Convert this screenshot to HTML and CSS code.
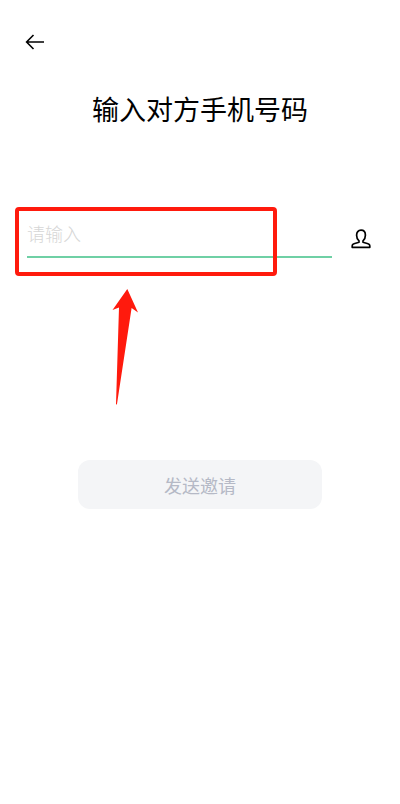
FILE: index.html
```
<!DOCTYPE html>
<html lang="zh-CN">
<head>
    <meta charset="UTF-8">
    <meta name="viewport" content="width=device-width, initial-scale=1.0">
    <title>输入对方手机号码</title>
    <link rel="stylesheet" href="styles.css">
</head>
<body>
    <header class="topbar">
        <button class="icon-button" type="button" aria-label="返回">
            <svg width="20" height="20" viewBox="0 0 20 20" fill="none" stroke="#000" stroke-width="1.6">
                <path d="M19 10H2M8.5 3L1.6 10l6.9 7"/>
            </svg>
        </button>
    </header>

    <main class="container">
        <h1 id="title">输入对方手机号码</h1>

        <form class="invite">
            <div class="field">
                <input class="phone" type="tel" placeholder="请输入" aria-labelledby="title">
                <button class="icon-button" type="button" aria-label="联系人">
                    <svg width="20" height="20" viewBox="0 0 20 20" fill="none" stroke="#000" stroke-width="1.7" stroke-linejoin="round">
                        <path d="M8 11.8C6.5 10.6 5.6 8.5 5.6 6.2C5.6 3.2 7.2 1.2 10 1.2s4.4 2 4.4 5c0 2.3-.9 4.4-2.4 5.6v1.5l5 1.4c1.3.4 1.8 1 1.8 2.1v1.5H1.2v-1.5c0-1.1.5-1.7 1.8-2.1l5-1.4z"/>
                    </svg>
                </button>
                <div class="highlight"></div>
                <svg class="pointer" width="28" height="116" viewBox="0 0 28 116" fill="#ff1a0d">
                    <path d="M15.3 0L26 23.5 19.6 19 5 115Q4.5 116 4 115L7 18.5 .5 21z"/>
                </svg>
            </div>
            <button class="submit" type="submit" disabled>发送邀请</button>
        </form>
    </main>
</body>
</html>
```

FILE: styles.css
```
* {
    box-sizing: border-box;
}

body {
    margin: 0;
    background: #fff;
    color: #000;
    font-family: "Noto Sans CJK SC", sans-serif;
}

button,
input {
    font-family: inherit;
    font-size: 18px;
    border: none;
    padding: 0;
}

.topbar {
    padding: 32px 25px 0;
}

.icon-button {
    display: block;
    flex: none;
    width: 20px;
    height: 20px;
    background: none;
    cursor: pointer;
}

.icon-button svg {
    display: block;
}

h1 {
    margin: 37px 0 0;
    font-size: 27px;
    line-height: 40px;
    font-weight: 400;
    text-align: center;
}

.field {
    position: relative;
    display: flex;
    align-items: center;
    gap: 19px;
    margin-top: 79px;
    padding: 0 29px 0 27px;
}

.phone {
    flex: 1;
    min-width: 0;
    height: 50px;
    padding-top: 2px;
    border-bottom: 2px solid #6fd0a5;
    border-radius: 0;
    background: none;
    outline: none;
}

.phone::placeholder {
    color: #d6d6d6;
    font-weight: 300;
    opacity: 1;
}

.field .icon-button {
    margin-top: 12px;
}

/* Red frame and arrow over the input */
.highlight {
    position: absolute;
    top: -1px;
    left: 15px;
    width: 262px;
    height: 69px;
    border: 4px solid #ff1a0d;
    border-radius: 4px;
    pointer-events: none;
}

.pointer {
    position: absolute;
    top: 81px;
    left: 112px;
    pointer-events: none;
}

.submit {
    display: block;
    width: 61%;
    height: 49px;
    margin: 202px auto 0;
    border-radius: 12px;
    background: #f4f5f7;
    color: #b5b9c6;
}
```
